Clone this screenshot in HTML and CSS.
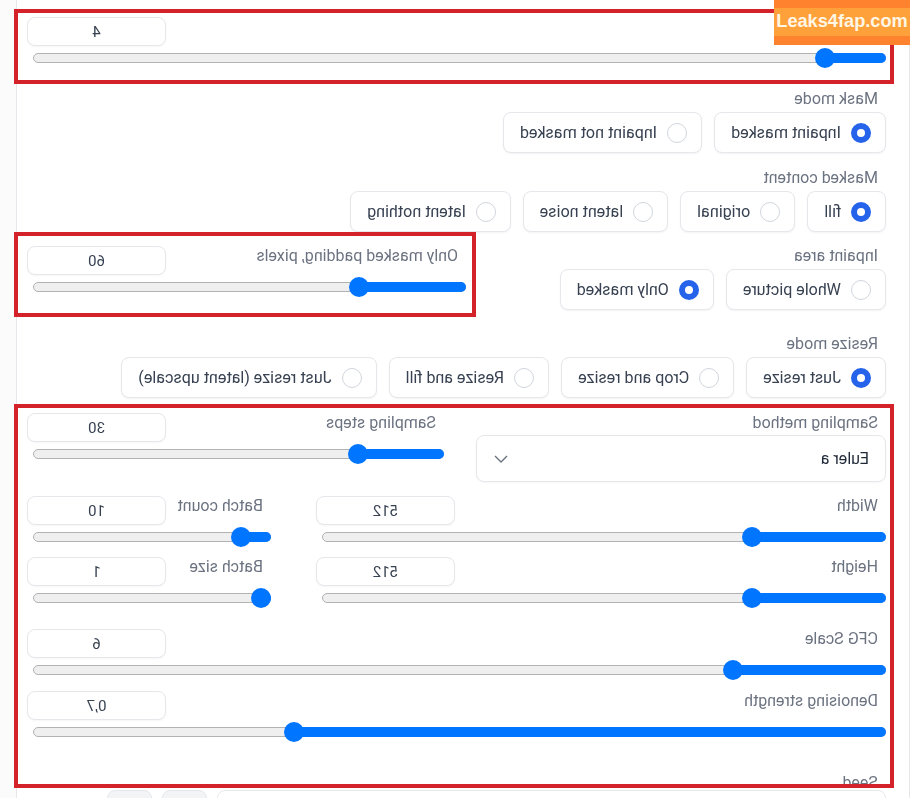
FILE: index.html
```html
<!DOCTYPE html>
<html lang="en">
<head>
    <meta charset="UTF-8">
    <meta name="viewport" content="width=device-width, initial-scale=1.0">
    <title>img2img settings</title>
    <link rel="stylesheet" href="styles.css">
</head>
<body>
    <div class="page">
        <div class="panel">
            <!-- mask blur (label sits under the corner badge) -->
            <div class="slider blur-slider" style="--pos: 7.1%">
                <div class="slider-head"><label></label><input class="num" type="text" value="4"></div>
                <div class="range"><div class="track"><div class="fill"></div><div class="thumb"></div></div></div>
            </div>

            <div class="field mode-field">
                <div class="field-label">Mask mode</div>
                <div class="radios">
                    <label class="radio on"><span class="dot"></span>Inpaint masked</label>
                    <label class="radio"><span class="dot"></span>Inpaint not masked</label>
                </div>
            </div>

            <div class="field content-field">
                <div class="field-label">Masked content</div>
                <div class="radios">
                    <label class="radio on"><span class="dot"></span>fill</label>
                    <label class="radio"><span class="dot"></span>original</label>
                    <label class="radio"><span class="dot"></span>latent noise</label>
                    <label class="radio"><span class="dot"></span>latent nothing</label>
                </div>
            </div>

            <div class="row inpaint-row">
                <div class="field">
                    <div class="field-label">Inpaint area</div>
                    <div class="radios">
                        <label class="radio"><span class="dot"></span>Whole picture</label>
                        <label class="radio on"><span class="dot"></span>Only masked</label>
                    </div>
                </div>
                <div class="slider" style="--pos: 24.5%">
                    <div class="slider-head"><label>Only masked padding, pixels</label><input class="num" type="text" value="60"></div>
                    <div class="range"><div class="track"><div class="fill"></div><div class="thumb"></div></div></div>
                </div>
            </div>

            <div class="field resize-field">
                <div class="field-label">Resize mode</div>
                <div class="radios">
                    <label class="radio on"><span class="dot"></span>Just resize</label>
                    <label class="radio"><span class="dot"></span>Crop and resize</label>
                    <label class="radio"><span class="dot"></span>Resize and fill</label>
                    <label class="radio"><span class="dot"></span>Just resize (latent upscale)</label>
                </div>
            </div>

            <div class="row sampler-row">
                <div class="field">
                    <div class="field-label select-label">Sampling method</div>
                    <div class="select">
                        <span>Euler a</span>
                        <svg width="14" height="8" viewBox="0 0 14 8"><path d="M1 1 L7 7 L13 1" fill="none" stroke="#6b7280" stroke-width="1.4"/></svg>
                    </div>
                </div>
                <div class="slider" style="--pos: 20.7%">
                    <div class="slider-head"><label>Sampling steps</label><input class="num" type="text" value="30"></div>
                    <div class="range"><div class="track"><div class="fill"></div><div class="thumb"></div></div></div>
                </div>
            </div>

            <div class="row dims-row">
                <div class="stack">
                    <div class="slider" style="--pos: 23.6%">
                        <div class="slider-head"><label>Width</label><input class="num" type="text" value="512"></div>
                        <div class="range"><div class="track"><div class="fill"></div><div class="thumb"></div></div></div>
                    </div>
                    <div class="slider" style="--pos: 23.6%">
                        <div class="slider-head"><label>Height</label><input class="num" type="text" value="512"></div>
                        <div class="range"><div class="track"><div class="fill"></div><div class="thumb"></div></div></div>
                    </div>
                </div>
                <div class="stack">
                    <div class="slider" style="--pos: 12.2%">
                        <div class="slider-head"><label>Batch count</label><input class="num" type="text" value="10"></div>
                        <div class="range"><div class="track"><div class="fill"></div><div class="thumb"></div></div></div>
                    </div>
                    <div class="slider" style="--pos: 4%">
                        <div class="slider-head"><label>Batch size</label><input class="num" type="text" value="1"></div>
                        <div class="range"><div class="track"><div class="fill"></div><div class="thumb"></div></div></div>
                    </div>
                </div>
            </div>

            <div class="slider cfg-slider" style="--pos: 17.9%">
                <div class="slider-head"><label>CFG Scale</label><input class="num" type="text" value="6"></div>
                <div class="range"><div class="track"><div class="fill"></div><div class="thumb"></div></div></div>
            </div>

            <div class="slider denoise-slider" style="--pos: 69.5%">
                <div class="slider-head"><label>Denoising strength</label><input class="num" type="text" value="0,7"></div>
                <div class="range"><div class="track"><div class="fill"></div><div class="thumb"></div></div></div>
            </div>

            <div class="field seed-field">
                <div class="field-label">Seed</div>
                <div class="seed-row">
                    <div class="seed-input"></div>
                    <div class="tool-btn"></div>
                    <div class="tool-btn"></div>
                </div>
            </div>
        </div>

        <!-- red highlight frames -->
        <div class="mark mark-blur"></div>
        <div class="mark mark-padding"></div>
        <div class="mark mark-gen"></div>
    </div>

    <div class="watermark">Leaks4fap.com</div>
</body>
</html>
```

FILE: styles.css
```css
* {
    margin: 0;
    padding: 0;
    box-sizing: border-box;
}

body {
    width: 910px;
    height: 798px;
    overflow: hidden;
    position: relative;
    background: #fbfbfc;
    font-family: Roboto, "Liberation Sans", sans-serif;
    color: #374151;
}

/* the whole sheet is shown flipped */
.page {
    position: relative;
    width: 910px;
    height: 798px;
    transform: scaleX(-1);
}

.panel {
    width: 894px;
    height: 798px;
    background: #fff;
    border-left: 1px solid #e5e7eb;
    border-right: 1px solid #e5e7eb;
    padding: 17px 10px 0 23px;
}

/* sliders */
.slider-head {
    display: flex;
    justify-content: space-between;
    align-items: flex-start;
    height: 29px;
}

.slider-head label,
.field-label {
    font-size: 16px;
    line-height: 20px;
    color: #6b7280;
    padding-left: 8px;
}

.num {
    width: 139px;
    height: 29px;
    border: 1px solid #e5e7eb;
    border-radius: 8px;
    background: #fff;
    text-align: center;
    font-family: inherit;
    font-size: 15px;
    color: #374151;
    box-shadow: 0 1px 2px rgba(0,0,0,0.04);
    outline: none;
}

.range {
    height: 24px;
    display: flex;
    align-items: center;
    padding-right: 6px;
}

.track {
    position: relative;
    flex: 1;
    height: 10px;
    background: #efefef;
    border: 1px solid #b2b2b2;
    border-radius: 5px;
}

.fill {
    position: absolute;
    left: -1px;
    top: -1px;
    bottom: -1px;
    width: calc(var(--pos) + 1px);
    background: #0075ff;
    border-radius: 5px;
}

.thumb {
    position: absolute;
    left: var(--pos);
    top: 50%;
    width: 20px;
    height: 20px;
    margin: -10px 0 0 -10px;
    border-radius: 50%;
    background: #0075ff;
}

/* radio groups */
.field-label {
    margin-bottom: 3px;
}

.radios {
    display: flex;
    gap: 12px;
}

.radio {
    display: flex;
    align-items: center;
    height: 41px;
    padding: 0 16px 0 14px;
    border: 1px solid #e5e7eb;
    border-radius: 8px;
    background: #fff;
    font-size: 16.1px;
    color: #374151;
    white-space: nowrap;
    box-shadow: 0 1px 2px rgba(0,0,0,0.05);
}

.dot {
    width: 20px;
    height: 20px;
    border-radius: 50%;
    border: 1px solid #d1d5db;
    background: #fff;
    margin-right: 10px;
    flex-shrink: 0;
}

.radio.on .dot {
    border: 6px solid #2563eb;
}

/* dropdown */
.select-label {
    margin-bottom: 2px;
}

.select {
    height: 47px;
    border: 1px solid #e5e7eb;
    border-radius: 8px;
    display: flex;
    align-items: center;
    justify-content: space-between;
    padding: 0 17px 0 16px;
    font-size: 16px;
    color: #1f2937;
    box-shadow: 0 1px 2px rgba(0,0,0,0.04);
}

/* rows */
.row {
    display: grid;
    align-items: start;
}

.stack {
    display: flex;
    flex-direction: column;
    gap: 8px;
}

.blur-slider { margin-bottom: 19px; }
.mode-field { margin-bottom: 15px; }
.content-field { margin-bottom: 14px; }

.inpaint-row {
    grid-template-columns: 388px 439px;
    column-gap: 32px;
    margin-bottom: 24px;
}

.resize-field { margin-bottom: 15px; }

.sampler-row {
    grid-template-columns: 410px 417px;
    column-gap: 32px;
    margin-bottom: 14px;
}

.dims-row {
    grid-template-columns: 570px 244px;
    column-gap: 45px;
    margin-bottom: 19px;
}

.cfg-slider { margin-bottom: 9px; }
.denoise-slider { margin-bottom: 29px; }

.seed-field .field-label {
    margin-bottom: -3px;
}

.seed-row {
    display: flex;
    gap: 10px;
}

.seed-input {
    width: 669px;
    height: 40px;
    border: 1px solid #e5e7eb;
    border-radius: 8px;
}

.tool-btn {
    width: 45px;
    height: 40px;
    background: #f3f4f6;
    border: 1px solid #e5e7eb;
    border-radius: 8px;
}

/* highlight frames */
.mark {
    position: absolute;
    border: 4px solid #d3222a;
}

.mark-blur {
    left: 16px;
    top: 9px;
    width: 880px;
    height: 75px;
}

.mark-padding {
    left: 434px;
    top: 232px;
    width: 462px;
    height: 85px;
}

.mark-gen {
    left: 16px;
    top: 404px;
    width: 880px;
    height: 384px;
}

.watermark {
    position: absolute;
    top: 0;
    right: 0;
    width: 136px;
    height: 45px;
    background: linear-gradient(#ff822e 0 8px, #ffa13a 8px 36px, #ff822e 36px);
    display: flex;
    align-items: center;
    justify-content: center;
    padding-bottom: 2px;
    font-family: "Liberation Sans", Arial, sans-serif;
    font-weight: bold;
    font-size: 18.2px;
    color: #fff6e4;
}
```
